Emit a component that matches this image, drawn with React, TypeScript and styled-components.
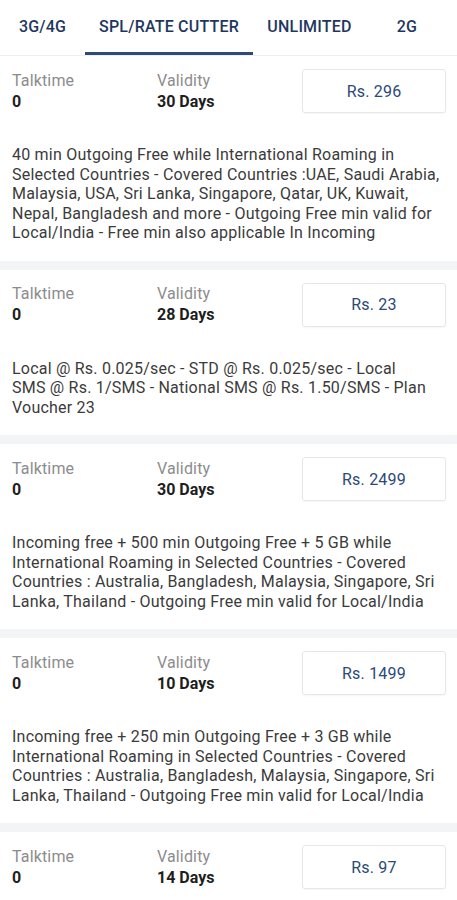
import React from "react";
import styled, { createGlobalStyle } from "styled-components";

const GlobalStyle = createGlobalStyle`
  body {
    margin: 0;
    background: #ffffff;
    font-family: Roboto, "Liberation Sans", sans-serif;
  }
`;

const Page = styled.div`
  width: 457px;
  overflow: hidden;
`;

const TabBar = styled.div`
  display: flex;
  height: 55px;
  border-bottom: 1px solid #eeeff1;
`;

const Tab = styled.div<{ $width: number; $active?: boolean }>`
  width: ${(p) => p.$width}px;
  flex: none;
  display: flex;
  align-items: center;
  justify-content: center;
  font-size: 16px;
  font-weight: 500;
  letter-spacing: 0.2px;
  color: #1f3760;
  white-space: nowrap;
  box-sizing: border-box;
  padding-top: 1px;
  border-bottom: 3px solid ${(p) => (p.$active ? "#2e4b73" : "transparent")};
`;

const Card = styled.div`
  padding: 13px 11px 18px 12px;
  border-bottom: 9px solid #f3f4f5;
`;

const Header = styled.div`
  display: flex;
  align-items: center;
`;

const Stat = styled.div<{ $width: number }>`
  width: ${(p) => p.$width}px;
  display: flex;
  flex-direction: column;
  gap: 3px;
`;

const Label = styled.span`
  font-size: 16px;
  letter-spacing: 0.15px;
  color: #8c8c8c;
  line-height: 18px;
`;

const Value = styled.span`
  font-size: 16px;
  font-weight: 700;
  color: #1e1e1e;
  line-height: 18px;
`;

const Price = styled.div`
  margin-left: auto;
  width: 144px;
  height: 44px;
  box-sizing: border-box;
  border: 1px solid #e6e7e9;
  border-radius: 3px;
  box-shadow: 0 1px 2px rgba(0, 0, 0, 0.04);
  display: flex;
  align-items: center;
  justify-content: center;
  font-size: 16px;
  letter-spacing: 0.2px;
  color: #2b4a78;
`;

const Description = styled.p`
  margin: 32px 0 0;
  font-size: 16px;
  letter-spacing: 0.22px;
  line-height: 19.5px;
  color: #3b3b3b;
`;

// lines are broken where the app's text view breaks them
const Line = styled.span`
  display: block;
  white-space: nowrap;
`;

interface Plan {
  talktime: string;
  validity: string;
  price: string;
  description?: string[];
}

const tabs = [
  { name: "3G/4G", width: 85 },
  { name: "SPL/RATE CUTTER", width: 168, active: true },
  { name: "UNLIMITED", width: 113 },
  { name: "2G", width: 82 },
];

const roaming = (incoming: string) => [
  incoming,
  "International Roaming in Selected Countries - Covered",
  "Countries : Australia, Bangladesh, Malaysia, Singapore, Sri",
  "Lanka, Thailand - Outgoing Free min valid for Local/India",
];

const plans: Plan[] = [
  {
    talktime: "0",
    validity: "30 Days",
    price: "Rs. 296",
    description: [
      "40 min Outgoing Free while International Roaming in",
      "Selected Countries - Covered Countries :UAE, Saudi Arabia,",
      "Malaysia, USA, Sri Lanka, Singapore, Qatar, UK, Kuwait,",
      "Nepal, Bangladesh and more - Outgoing Free min valid for",
      "Local/India - Free min also applicable In Incoming",
    ],
  },
  {
    talktime: "0",
    validity: "28 Days",
    price: "Rs. 23",
    description: [
      "Local @ Rs. 0.025/sec - STD @ Rs. 0.025/sec - Local",
      "SMS @ Rs. 1/SMS - National SMS @ Rs. 1.50/SMS - Plan",
      "Voucher 23",
    ],
  },
  {
    talktime: "0",
    validity: "30 Days",
    price: "Rs. 2499",
    description: roaming("Incoming free + 500 min Outgoing Free + 5 GB while"),
  },
  {
    talktime: "0",
    validity: "10 Days",
    price: "Rs. 1499",
    description: roaming("Incoming free + 250 min Outgoing Free + 3 GB while"),
  },
  {
    talktime: "0",
    validity: "14 Days",
    price: "Rs. 97",
  },
];

function PlanCard({ plan }: { plan: Plan }) {
  return (
    <Card>
      <Header>
        <Stat $width={145}>
          <Label>Talktime</Label>
          <Value>{plan.talktime}</Value>
        </Stat>
        <Stat $width={120}>
          <Label>Validity</Label>
          <Value>{plan.validity}</Value>
        </Stat>
        <Price>{plan.price}</Price>
      </Header>
      {plan.description && (
        <Description>
          {plan.description.map((l) => (
            <Line key={l}>{l}</Line>
          ))}
        </Description>
      )}
    </Card>
  );
}

export default function App() {
  return (
    <Page>
      <GlobalStyle />
      <TabBar>
        {tabs.map((t) => (
          <Tab key={t.name} $width={t.width} $active={t.active}>
            {t.name}
          </Tab>
        ))}
      </TabBar>
      {plans.map((p, i) => (
        <PlanCard key={i} plan={p} />
      ))}
    </Page>
  );
}
